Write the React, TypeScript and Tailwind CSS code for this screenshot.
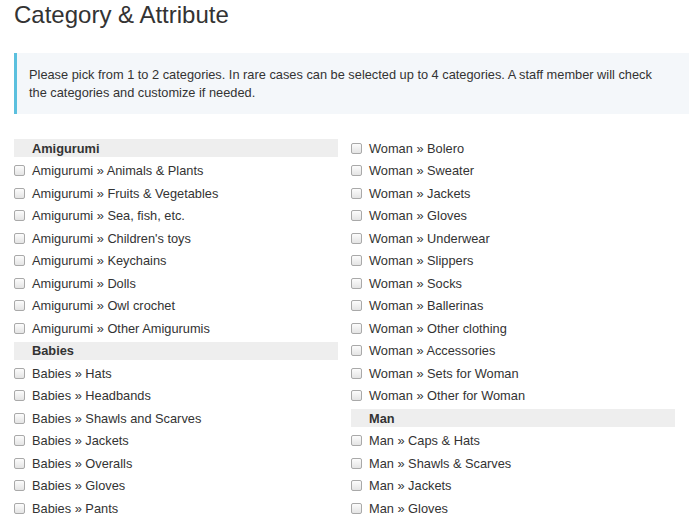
import React from "react";

type Row = { kind: "head"; label: string } | { kind: "item"; label: string };

const leftRows: Row[] = [
  { kind: "head", label: "Amigurumi" },
  { kind: "item", label: "Amigurumi » Animals & Plants" },
  { kind: "item", label: "Amigurumi » Fruits & Vegetables" },
  { kind: "item", label: "Amigurumi » Sea, fish, etc." },
  { kind: "item", label: "Amigurumi » Children's toys" },
  { kind: "item", label: "Amigurumi » Keychains" },
  { kind: "item", label: "Amigurumi » Dolls" },
  { kind: "item", label: "Amigurumi » Owl crochet" },
  { kind: "item", label: "Amigurumi » Other Amigurumis" },
  { kind: "head", label: "Babies" },
  { kind: "item", label: "Babies » Hats" },
  { kind: "item", label: "Babies » Headbands" },
  { kind: "item", label: "Babies » Shawls and Scarves" },
  { kind: "item", label: "Babies » Jackets" },
  { kind: "item", label: "Babies » Overalls" },
  { kind: "item", label: "Babies » Gloves" },
  { kind: "item", label: "Babies » Pants" },
];

const rightRows: Row[] = [
  { kind: "item", label: "Woman » Bolero" },
  { kind: "item", label: "Woman » Sweater" },
  { kind: "item", label: "Woman » Jackets" },
  { kind: "item", label: "Woman » Gloves" },
  { kind: "item", label: "Woman » Underwear" },
  { kind: "item", label: "Woman » Slippers" },
  { kind: "item", label: "Woman » Socks" },
  { kind: "item", label: "Woman » Ballerinas" },
  { kind: "item", label: "Woman » Other clothing" },
  { kind: "item", label: "Woman » Accessories" },
  { kind: "item", label: "Woman » Sets for Woman" },
  { kind: "item", label: "Woman » Other for Woman" },
  { kind: "head", label: "Man" },
  { kind: "item", label: "Man » Caps & Hats" },
  { kind: "item", label: "Man » Shawls & Scarves" },
  { kind: "item", label: "Man » Jackets" },
  { kind: "item", label: "Man » Gloves" },
];

const CategoryRow: React.FC<{ row: Row }> = ({ row }) => {
  if (row.kind === "head") {
    return (
      <div className="h-[22.5px] flex items-center">
        <div className="w-full h-[18px] bg-[#eeeeee] pl-[18px] flex items-center text-[12.8px] font-bold text-[#333]">
          {row.label}
        </div>
      </div>
    );
  }
  return (
    <label className="h-[22.5px] flex items-center gap-[7px] text-[12.8px] text-[#333]">
      <span className="w-[11px] h-[11px] rounded-[2px] border border-[#a9a9a9] bg-gradient-to-b from-[#fcfcfc] to-[#e4e4e4] shrink-0" />
      <span>{row.label}</span>
    </label>
  );
};

export default function App() {
  return (
    <div
      className="bg-white w-[691px] h-[520px] overflow-hidden pl-[14px]"
      style={{ fontFamily: '"Liberation Sans", Arial, sans-serif' }}
    >
      <h3 className="text-[24px] leading-[30px] text-[#333]">
        Category &amp; Attribute
      </h3>

      <div className="mt-[23px] w-[675px] bg-[#f4f7fa] border-l-[3px] border-[#5bc0de] pl-[12px] pr-[10px] pt-[13px] pb-[13px] text-[12.8px] leading-[17.5px] text-[#333]">
        Please pick from 1 to 2 categories. In rare cases can be selected up to 4 categories. A staff member will check
        <br />
        the categories and customize if needed.
      </div>

      <div className="mt-[23px] w-[661px] grid grid-cols-2 gap-x-[13px]">
        <div className="flex flex-col">
          {leftRows.map((r, i) => (
            <CategoryRow key={i} row={r} />
          ))}
        </div>
        <div className="flex flex-col">
          {rightRows.map((r, i) => (
            <CategoryRow key={i} row={r} />
          ))}
        </div>
      </div>
    </div>
  );
}
